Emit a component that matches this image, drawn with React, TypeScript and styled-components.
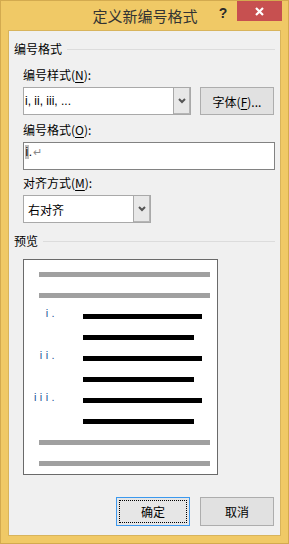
import React, { FC } from 'react'
import styled, { createGlobalStyle } from 'styled-components'

const GlobalStyle = createGlobalStyle`
  html, body {
    margin: 0;
    padding: 0;
    background: #f0c966;
  }

  * {
    box-sizing: border-box;
  }
`

const CJK = `'Noto Sans CJK SC', 'Noto Sans', sans-serif`
const LATIN = `'Liberation Sans', 'Noto Sans CJK SC', sans-serif`

interface Bar {
  kind: 'gray' | 'black'
  label?: string
  width?: number
}

const PREVIEW_BARS: Bar[] = [
  { kind: 'gray' },
  { kind: 'gray' },
  { kind: 'black', label: 'i.', width: 119 },
  { kind: 'black', width: 111 },
  { kind: 'black', label: 'ii.', width: 119 },
  { kind: 'black', width: 111 },
  { kind: 'black', label: 'iii.', width: 119 },
  { kind: 'black', width: 111 },
  { kind: 'gray' },
  { kind: 'gray' },
]

const Chevron: FC = () => (
  <svg width="8" height="6" viewBox="0 0 8 6">
    <polyline points="1,1 4,4 7,1" fill="none" stroke="#555" strokeWidth="2" />
  </svg>
)

const App: FC = () => {
  return (
    <>
      <GlobalStyle />
      <Window>
        <TitleBar>
          <Title>定义新编号格式</Title>
          <Controls>
            <HelpButton>?</HelpButton>
            <CloseButton>
              <svg width="9" height="9" viewBox="0 0 9 9">
                <path d="M1 1 L8 8 M8 1 L1 8" stroke="#fff" strokeWidth="2.2" />
              </svg>
            </CloseButton>
          </Controls>
        </TitleBar>

        <Client>
          <GroupHeader>
            <span>编号格式</span>
            <Rule />
          </GroupHeader>

          <FieldLabel $mt={10}>
            编号样式(<u>N</u>):
          </FieldLabel>
          <FieldRow>
            <Combo $width={168}>
              <ComboText $font={LATIN}>i, ii, iii, ...</ComboText>
              <DropButton>
                <Chevron />
              </DropButton>
            </Combo>
            <PushButton>
              字体(<u>F</u>)...
            </PushButton>
          </FieldRow>

          <FieldLabel $mt={7}>
            编号格式(<u>O</u>):
          </FieldLabel>
          <TextInput>
            <Selected>i</Selected>.<ReturnMark>↵</ReturnMark>
          </TextInput>

          <FieldLabel $mt={5}>
            对齐方式(<u>M</u>):
          </FieldLabel>
          <FieldRow>
            <Combo $width={128}>
              <ComboText $font={CJK} $pad={4}>
                右对齐
              </ComboText>
              <DropButton>
                <Chevron />
              </DropButton>
            </Combo>
          </FieldRow>

          <GroupHeader $mt={10}>
            <span>预览</span>
            <Rule />
          </GroupHeader>

          <Preview>
            {PREVIEW_BARS.map((bar, index) =>
              bar.kind === 'gray' ? (
                <BarRow key={index}>
                  <GrayBar />
                </BarRow>
              ) : (
                <BarRow key={index}>
                  <NumberLabel>{bar.label ?? ''}</NumberLabel>
                  <BlackBar style={{ width: bar.width }} />
                </BarRow>
              )
            )}
          </Preview>

          <ButtonRow>
            <PushButton $primary>确定</PushButton>
            <PushButton>取消</PushButton>
          </ButtonRow>
        </Client>
      </Window>
    </>
  )
}

export default App

const Window = styled.div`
  width: 289px;
  height: 544px;
  display: flex;
  flex-direction: column;
  background: #f0c966;
  border: 1px solid #d3aa4f;
`

const TitleBar = styled.div`
  height: 29px;
  display: grid;
  flex-shrink: 0;
`

const Title = styled.div`
  grid-area: 1 / 1;
  justify-self: center;
  align-self: center;
  font-family: ${CJK};
  font-size: 15px;
  line-height: 20px;
  color: #333;
  padding-left: 1px;
`

const Controls = styled.div`
  grid-area: 1 / 1;
  justify-self: end;
  align-self: start;
  display: flex;
  margin-right: 6px;
`

const HelpButton = styled.div`
  width: 28px;
  height: 20px;
  display: flex;
  align-items: center;
  justify-content: center;
  font-family: ${LATIN};
  font-weight: 700;
  font-size: 14px;
  color: #2a2a2a;
  padding-top: 3px;
`

const CloseButton = styled.div`
  width: 45px;
  height: 20px;
  background: #c75050;
  display: flex;
  align-items: center;
  justify-content: center;
`

const Client = styled.div`
  flex: 1;
  margin: 0 7px 7px 7px;
  background: #f0f0f0;
  border: 1px solid #d8b45c;
  display: flex;
  flex-direction: column;
  padding: 10px 5px 0 5px;
  font-family: ${CJK};
  font-size: 12px;
  color: #000;
`

const GroupHeader = styled.div<{ $mt?: number }>`
  height: 16px;
  line-height: 16px;
  display: flex;
  align-items: center;
  gap: 5px;
  margin-top: ${(p) => p.$mt ?? 0}px;
  white-space: nowrap;
`

const Rule = styled.div`
  flex: 1;
  height: 1px;
  background: #dcdcdc;
  margin-top: 1px;
`

const FieldLabel = styled.div<{ $mt: number }>`
  height: 16px;
  line-height: 16px;
  margin: ${(p) => p.$mt}px 0 0 9px;
  white-space: nowrap;

  u {
    text-decoration-thickness: 1px;
    text-underline-offset: 2px;
  }
`

const FieldRow = styled.div`
  display: flex;
  gap: 9px;
  margin: 4px 0 0 9px;
`

const Combo = styled.div<{ $width: number }>`
  width: ${(p) => p.$width}px;
  height: 28px;
  display: flex;
  background: #fff;
  border: 1px solid #a9a9a9;
`

const ComboText = styled.div<{ $font: string; $pad?: number }>`
  flex: 1;
  display: flex;
  align-items: center;
  padding-left: ${(p) => p.$pad ?? 1}px;
  font-family: ${(p) => p.$font};
  font-size: 12px;
  color: #000;
  white-space: nowrap;
`

const DropButton = styled.div`
  width: 17px;
  display: flex;
  align-items: center;
  justify-content: center;
  background: #e8e8e8;
  border-left: 1px solid #a9a9a9;
  box-shadow: inset -1px -1px 0 #b5b5b5;
`

const PushButton = styled.div<{ $primary?: boolean }>`
  width: 74px;
  height: 28px;
  display: flex;
  align-items: center;
  justify-content: center;
  background: ${(p) => (p.$primary ? '#e6e6e6' : '#e1e1e1')};
  border: 1px solid ${(p) => (p.$primary ? '#3c99ee' : '#adadad')};
  outline: ${(p) => (p.$primary ? '1px dotted #000' : 'none')};
  outline-offset: -4px;
  font-family: ${CJK};
  font-size: 12px;
  color: #000;
  white-space: nowrap;

  u {
    text-underline-offset: 2px;
  }
`

const TextInput = styled.div`
  height: 28px;
  margin: 4px 0 0 9px;
  background: #fff;
  border: 1px solid #828282;
  padding: 2px 0 0 1px;
  font-family: ${LATIN};
  font-size: 12px;
  line-height: 15px;
  color: #000;
`

const Selected = styled.span`
  background: #bdbdbd;
  padding: 0 0.5px;
`

const ReturnMark = styled.span`
  color: #8a8a8a;
  font-size: 11px;
  margin-left: 1px;
`

const Preview = styled.div`
  width: 195px;
  height: 216px;
  margin: 10px 0 0 9px;
  background: #fff;
  border: 1px solid #6a6a6a;
  padding: 12px 0 0 0;
  display: flex;
  flex-direction: column;
  gap: 16px;
`

const BarRow = styled.div`
  height: 5px;
  display: flex;
  align-items: flex-start;
`

const GrayBar = styled.div`
  width: 171px;
  height: 5px;
  margin-left: 15px;
  background: #a0a0a0;
`

const NumberLabel = styled.div`
  width: 34px;
  margin-top: -7px;
  text-align: right;
  font-family: ${LATIN};
  font-size: 11px;
  line-height: 12px;
  letter-spacing: 3.4px;
  color: #22579a;
  white-space: nowrap;
`

const BlackBar = styled.div`
  height: 5px;
  margin-left: 25px;
  background: #000;
`

const ButtonRow = styled.div`
  display: flex;
  justify-content: flex-end;
  gap: 10px;
  margin-top: 22px;
  padding-right: 1px;

  & > div {
    height: 29px;
  }
`
